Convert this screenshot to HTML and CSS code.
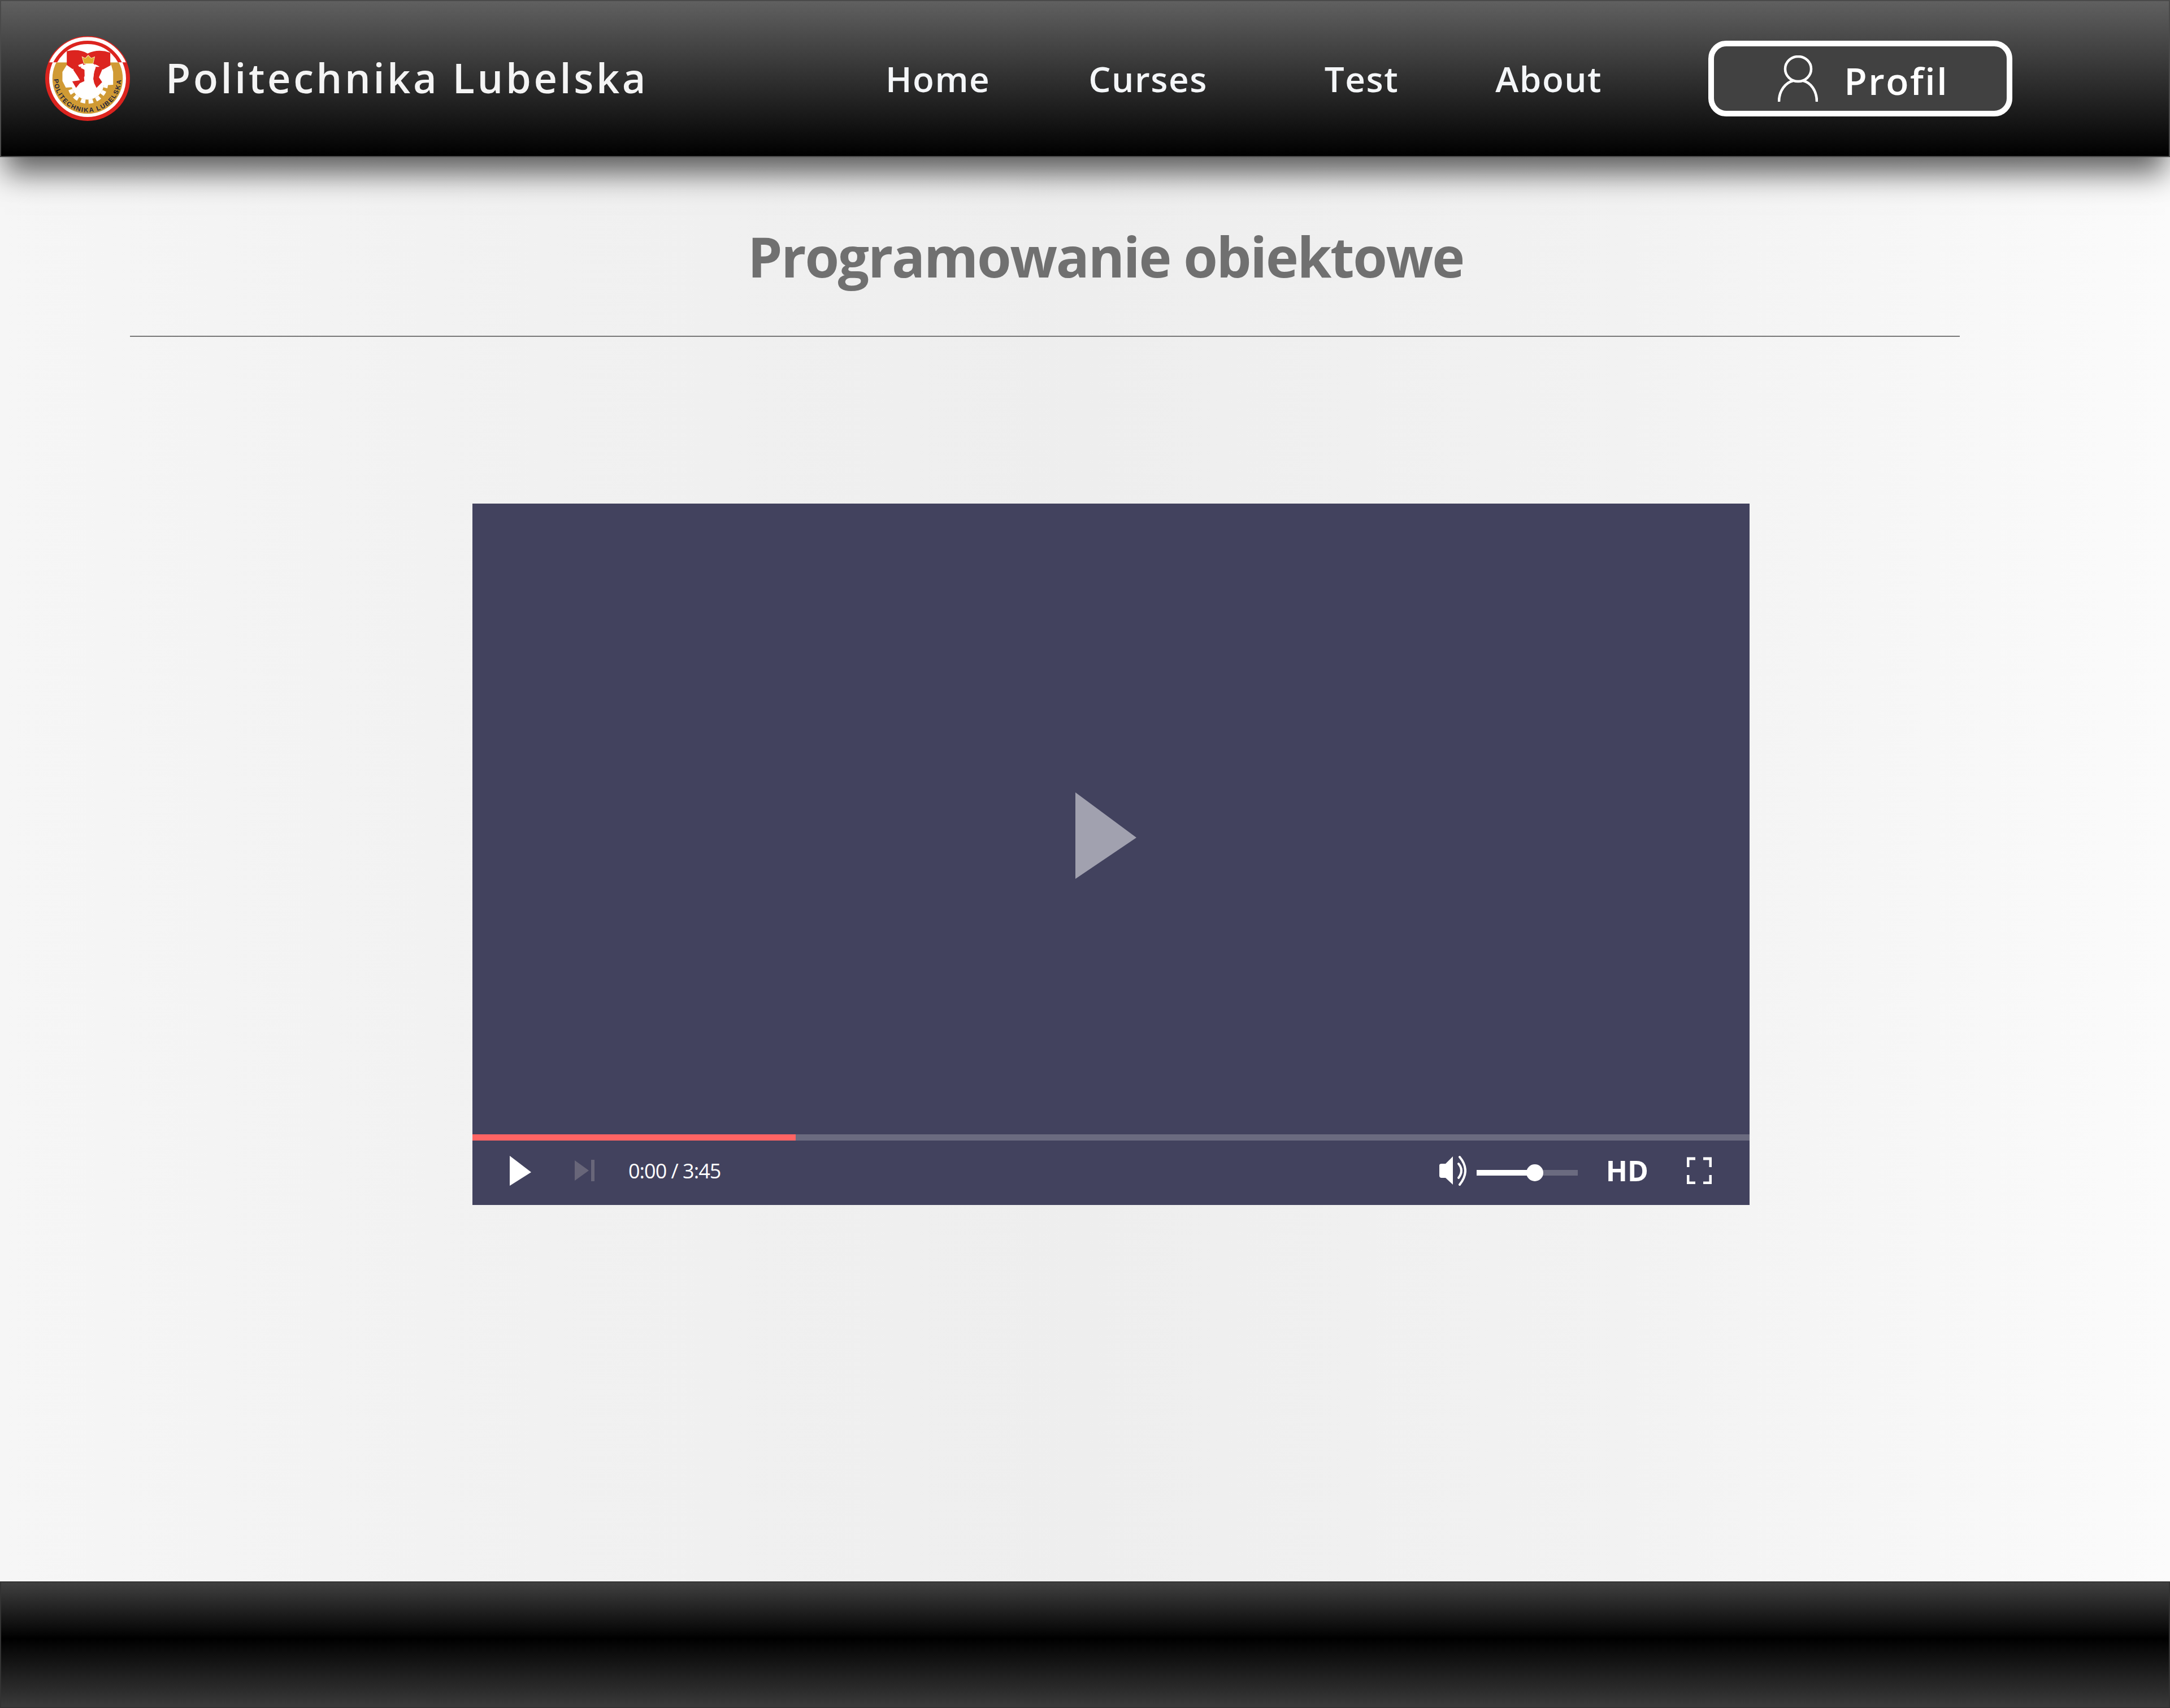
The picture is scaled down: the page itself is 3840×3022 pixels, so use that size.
FILE: index.html
```html
<!DOCTYPE html>
<html lang="pl">
<head>
    <meta charset="UTF-8">
    <meta name="viewport" content="width=device-width, initial-scale=1.0">
    <title>Programowanie obiektowe - Politechnika Lubelska</title>
    <link rel="stylesheet" href="styles.css">
</head>
<body>
    <header class="topbar">
        <svg class="logo" viewBox="91 73 448 448">
            <defs>
                <clipPath id="logoTop"><rect x="91" y="73" width="448" height="138"/></clipPath>
                <path id="logoArc" d="M 151 228 A 178 178 0 1 0 479 228"/>
            </defs>
            <circle cx="315" cy="297" r="224" fill="#dc241f"/>
            <circle cx="315" cy="297" r="203" fill="#fff"/>
            <circle cx="315" cy="297" r="186" fill="#d09a34"/>
            <g clip-path="url(#logoTop)">
                <circle cx="315" cy="297" r="222" fill="#fff" stroke="#dc241f" stroke-width="5"/>
                <circle cx="315" cy="297" r="191" fill="#fff" stroke="#dc241f" stroke-width="18"/>
            </g>
            <path d="M205 152 Q270 138 315 165 Q370 138 435 160 V250 L390 340 H240 L205 250 Z" fill="#dc241f"/>
            <circle cx="315" cy="322" r="86" fill="#fff"/>
            <circle cx="315" cy="322" r="97" fill="none" stroke="#fff" stroke-width="22" stroke-dasharray="24 17"/>
            <path d="M182 262 L205 225 L240 250 L262 285 L278 300 L372 300 L385 255 L440 225 L450 262 V330 L200 345 L182 310 Z" fill="#fff"/>
            <path d="M240 252 L262 285 L274 306 L234 312 L254 346 L274 322 L300 310 L298 235 L240 235 Z" fill="#dc241f"/>
            <path d="M392 250 L375 290 L392 316 L362 346 L350 322 L345 300 L352 235 L392 235 Z" fill="#dc241f"/>
            <path d="M278 240 Q290 222 315 218 L350 220 L358 238 L350 262 L344 295 L350 330 L300 330 L296 290 L312 262 L298 250 Z" fill="#fff"/>
            <path d="M286 182 L303 190 L318 174 L334 190 L352 182 L344 218 H296 Z" fill="#e0a92c" stroke="#f4e2b0" stroke-width="3"/>
            <text class="logo-text"><textPath href="#logoArc" startOffset="50%" text-anchor="middle">POLITECHNIKA LUBELSKA</textPath></text>
        </svg>
        <div class="brand">Politechnika Lubelska</div>
        <nav class="menu">
            <a class="menu-link" href="#">Home</a>
            <a class="menu-link" href="#">Curses</a>
            <a class="menu-link menu-test" href="#">Test</a>
            <a class="menu-link" href="#">About</a>
        </nav>
        <a class="profile-btn" href="#">
            <svg class="profile-icon" viewBox="0 0 71 82" fill="none" stroke="#fff" stroke-width="4.5">
                <ellipse cx="36" cy="24" rx="23" ry="22"/>
                <path d="M2 82 C2 62 14 48 27 45 M69 82 C69 62 58 48 45 45"/>
            </svg>
            <span class="profile-label">Profil</span>
        </a>
    </header>

    <main class="page">
        <h1 class="page-title">Programowanie obiektowe</h1>
        <div class="rule"></div>

        <section class="player">
            <div class="screen">
                <svg class="big-play" viewBox="0 0 108 153"><path d="M0 0 L108 80 L0 153 Z" fill="#a1a1af"/></svg>
            </div>
            <div class="progress"><div class="progress-done"></div></div>
            <div class="controls">
                <svg class="ctl-play" viewBox="0 0 38 53"><path d="M0 0 L38 29 L0 53 Z" fill="#fff"/></svg>
                <svg class="ctl-next" viewBox="0 0 35 38"><path d="M0 1 L25 19 L0 37 Z M29 0 H35 V38 H29 Z" fill="#686679"/></svg>
                <span class="time">0:00 / 3:45</span>
                <svg class="ctl-volume" viewBox="0 0 48 54" fill="none">
                    <path d="M0 18 Q0 15 4 15 H11 L24 2 V52 L11 40 H4 Q0 40 0 36 Z" fill="#fff"/>
                    <path d="M34 15 Q44 27 34 40" stroke="#fff" stroke-width="4" stroke-linecap="round"/>
                    <path d="M36 3 Q56 27 36 52" stroke="#fff" stroke-width="4" stroke-linecap="round"/>
                </svg>
                <div class="volume-bar">
                    <div class="volume-level"></div>
                    <div class="volume-knob"></div>
                </div>
                <span class="hd">HD</span>
                <svg class="ctl-full" viewBox="0 0 44 48" fill="none" stroke="#fff" stroke-width="5">
                    <path d="M2 18 V3 H15 M29 3 H42 V18 M2 32 V46 H15 M29 46 H42 V32"/>
                </svg>
            </div>
        </section>
    </main>

    <footer class="bottombar"></footer>
</body>
</html>
```

FILE: styles.css
```css
* {
    margin: 0;
    padding: 0;
    box-sizing: border-box;
}

html, body {
    height: 100%;
}

body {
    display: flex;
    flex-direction: column;
    min-height: 3022px;
    font-family: 'Open Sans', 'Noto Sans', sans-serif;
    background: linear-gradient(to right, #f6f6f6 0%, #f1f1f1 25%, #eeeeee 50%, #f2f2f2 75%, #fbfbfb 100%);
    overflow: hidden;
}

.topbar {
    position: relative;
    z-index: 2;
    display: flex;
    align-items: center;
    height: 278px;
    flex-shrink: 0;
    padding-left: 78px;
    background: linear-gradient(to bottom, #606060 0%, #000000 100%);
    border: 2px solid #4a4a4a;
    box-shadow: 0 36px 50px -8px rgba(0, 0, 0, 0.62);
}

.logo {
    width: 150px;
    height: 150px;
    flex-shrink: 0;
}

.logo-text {
    font-family: 'Liberation Sans', sans-serif;
    font-size: 34px;
    font-weight: bold;
    letter-spacing: 5px;
    fill: #26263a;
}

.brand {
    margin-left: 63px;
    margin-bottom: 4px;
    width: 1040px;
    font-size: 72px;
    font-weight: 600;
    letter-spacing: 4.65px;
    color: #f4f4f4;
    white-space: nowrap;
}

.menu {
    display: flex;
    gap: 174px;
    margin-left: 234px;
}

.menu-link {
    font-size: 62px;
    font-weight: 600;
    letter-spacing: 1.5px;
    color: #f4f6f8;
    text-decoration: none;
}

.menu-test {
    margin-left: 33px;
    margin-right: -3px;
}

.profile-btn {
    display: flex;
    align-items: center;
    width: 538px;
    height: 134px;
    margin-left: 188px;
    padding-left: 113px;
    gap: 46px;
    border: 10px solid #ffffff;
    border-radius: 32px;
    background-color: #414141;
    font-size: 66px;
    font-weight: 600;
    letter-spacing: 2.5px;
    color: #ffffff;
    text-decoration: none;
}

.profile-label {
    padding-top: 6px;
}

.profile-icon {
    width: 71px;
    height: 82px;
    flex-shrink: 0;
}

.page {
    flex: 1;
}

.page-title {
    margin-left: 1323px;
    padding-top: 110px;
    font-size: 98px;
    line-height: 130px;
    font-weight: 700;
    letter-spacing: -2.3px;
    color: #707070;
    white-space: nowrap;
}

.rule {
    width: 3238px;
    height: 2px;
    margin: 76px 0 0 230px;
    background-color: #777777;
}

.player {
    display: flex;
    flex-direction: column;
    width: 2260px;
    height: 1241px;
    margin-left: 836px;
    margin-top: 295px;
    background-color: #42425e;
}

.screen {
    flex: 1;
    display: flex;
    align-items: center;
    justify-content: center;
    padding: 58px 18px 0 0;
}

.big-play {
    width: 108px;
    height: 153px;
}

.progress {
    height: 11px;
    background-color: #6b6b80;
}

.progress-done {
    width: 572px;
    height: 100%;
    background-color: #ff6464;
}

.controls {
    display: flex;
    align-items: center;
    height: 114px;
    padding: 0 67px 8px 66px;
    color: #ffffff;
}

.ctl-play {
    width: 38px;
    height: 53px;
}

.ctl-next {
    width: 35px;
    height: 38px;
    margin-left: 77px;
}

.time {
    margin-left: 60px;
    font-size: 36px;
    letter-spacing: -1px;
}

.ctl-volume {
    width: 48px;
    height: 54px;
    margin-left: auto;
}

.volume-bar {
    position: relative;
    width: 179px;
    height: 10px;
    margin: 8px 0 0 18px;
    background-color: #6b6b80;
}

.volume-level {
    width: 103px;
    height: 100%;
    background-color: #ffffff;
}

.volume-knob {
    position: absolute;
    left: 88px;
    top: -10px;
    width: 30px;
    height: 30px;
    border-radius: 50%;
    background-color: #ffffff;
}

.hd {
    margin-left: 50px;
    font-size: 50px;
    font-weight: 700;
}

.ctl-full {
    width: 44px;
    height: 48px;
    margin-left: 68px;
}

.bottombar {
    height: 224px;
    flex-shrink: 0;
    background: linear-gradient(to bottom, #404040 0%, #000000 45%, #3a3a3a 100%);
    border: 2px solid #333333;
}
```
